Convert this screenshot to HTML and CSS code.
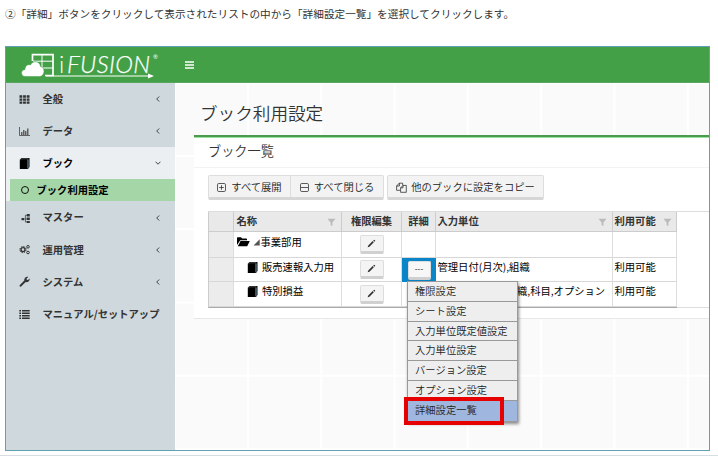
FILE: index.html
```html
<!DOCTYPE html>
<html lang="ja">
<head>
<meta charset="utf-8">
<title>ブック利用設定</title>
<link rel="stylesheet" href="styles.css">
</head>
<body>
<svg class="defs" aria-hidden="true">
  <symbol id="book" viewBox="0 0 11 11"><path d="M2.5 0H10.5V9L9 11H.8V1.8Z" fill="#000"/><path d="M1.3 2 2.8.8H9.3" fill="none" stroke="#999" stroke-width=".5"/><path d="M9 1.5V10.5" stroke="#8fb0c4" stroke-width=".9"/></symbol>
  <symbol id="pencil" viewBox="0 0 10 10"><path d="M.7 9.3 1.4 7.2 6.3 2.3 7.6 3.6 2.7 8.5ZM6.9 1.7 7.6 1Q8 .7 8.4 1L9 1.6Q9.3 1.9 9 2.3L8.2 3Z" fill="#333"/></symbol>
  <symbol id="filter" viewBox="0 0 9 9"><path d="M.5 .7H8.5L5.4 4.4V8.2L3.6 7V4.4Z" fill="#bbb"/></symbol>
</svg>
<p class="caption">②「詳細」ボタンをクリックして表示されたリストの中から「詳細設定一覧」を選択してクリックします。</p>
<div class="frame">
  <header class="topbar">
    <div class="logo">
      <svg class="logo-mark" viewBox="0 0 134 26">
        <g fill="none" stroke="#fff"><path d="M11.5 8V1.6H32V22.5H24" stroke-width="1.7"/><path d="M12 8.2H32M21 1.5V15M21 15H32" stroke-width="1"/><path d="M25 23H130" stroke-width="1"/></g>
        <path d="M4 23.5C-.5 23-.8 17 4 16.5C4 12.5 7 11 9.5 12C12 7 19 8 19.5 13.5C24 14 24.5 22.5 19 23.5Z" fill="#fff" stroke="#43a047" stroke-width=".5"/>
        <path d="M127 20.6 133 23 127 25.5Z" fill="#fff"/>
      </svg>
      <span class="logo-i">i</span><span class="logo-name">FUSION</span><span class="logo-r">®</span>
    </div>
    <svg class="burger" viewBox="0 0 9 8"><path d="M0 1H9M0 4H9M0 7H9" stroke="#fff" stroke-width="1.6"/></svg>
  </header>
  <div class="body">
    <nav class="side">
      <div class="item"><svg class="ico" viewBox="0 0 11 11"><path d="M.5 2.5H10.5M.5 5.6H10.5M.5 8.7H10.5" stroke="#333" stroke-width="2.3" stroke-dasharray="2.8 .8"/></svg><span>全般</span><svg class="arr" viewBox="0 0 6 6"><path d="M4.2.5 1.7 3 4.2 5.5"/></svg></div>
      <div class="item"><svg class="ico" viewBox="0 0 11 11"><path d="M.5 1V9.5H11" fill="none" stroke="#444" stroke-width=".8"/><path d="M2.8 9V6M4.8 9V4M6.8 9V5M8.8 9V2.5" stroke="#444" stroke-width="1.2"/></svg><span>データ</span><svg class="arr" viewBox="0 0 6 6"><path d="M4.2.5 1.7 3 4.2 5.5"/></svg></div>
      <div class="item open"><svg class="ico"><use href="#book"/></svg><span>ブック</span><svg class="arr" viewBox="0 0 6 6"><path d="M.5 1.7 3 4.2 5.5 1.7"/></svg></div>
      <div class="sub"><span class="ring"></span><span>ブック利用設定</span></div>
      <div class="item"><svg class="ico" viewBox="0 0 11 11"><path d="M2.5 6H5V8.3H2.5ZM7.8 2H10.8V4.6H7.8ZM7.8 5.6H10.8V8H7.8ZM7.8 9H10.8V11H7.8Z" fill="#333"/><path d="M4 7H8M6.4 3.3V10M6.4 3.3H8M6.4 10H8" fill="none" stroke="#333" stroke-width=".7"/></svg><span>マスター</span><svg class="arr" viewBox="0 0 6 6"><path d="M4.2.5 1.7 3 4.2 5.5"/></svg></div>
      <div class="item"><svg class="ico" viewBox="0 0 11 11"><g fill="none" stroke="#333"><circle cx="4" cy="5.6" r="2" stroke-width="1.4"/><circle cx="4" cy="5.6" r="3.1" stroke-width="1" stroke-dasharray="1.4 1.03"/><circle cx="9" cy="2.8" r="1.3"/><circle cx="9" cy="8.5" r="1.3"/></g></svg><span>運用管理</span><svg class="arr" viewBox="0 0 6 6"><path d="M4.2.5 1.7 3 4.2 5.5"/></svg></div>
      <div class="item"><svg class="ico" viewBox="0 0 11 11"><path d="M.7 9.2 5.3 4.6C4.8 2.2 7 .1 9.3.9L7.5 2.5 7.8 3.7 9 4 10.7 2.5C11 5 8.8 6.7 6.7 6L2.1 10.6Q1.4 11 .9 10.4Q.3 9.8.7 9.2Z" fill="#333"/></svg><span>システム</span><svg class="arr" viewBox="0 0 6 6"><path d="M4.2.5 1.7 3 4.2 5.5"/></svg></div>
      <div class="item"><svg class="ico" viewBox="0 0 11 11"><path d="M.3 1.7H2M.3 4.2H2M.3 6.7H2M.3 9.2H2M3 1.7H10.7M3 4.2H10.7M3 6.7H10.7M3 9.2H10.7" stroke="#333" stroke-width="1.5"/></svg><span>マニュアル/セットアップ</span></div>
    </nav>
    <main class="main">
      <h1>ブック利用設定</h1>
      <section class="panel">
        <h2>ブック一覧</h2>
        <div class="tools">
          <div class="group">
            <button class="btn expand"><svg viewBox="0 0 9 9"><rect x=".5" y=".5" width="8" height="8" rx="1.3"/><path d="M2.2 4.5H6.8M4.5 2.2V6.8"/></svg>すべて展開</button><button class="btn collapse"><svg viewBox="0 0 9 9"><rect x=".5" y=".5" width="8" height="8" rx="1.3"/><path d="M1 4.5H8"/></svg>すべて閉じる</button>
          </div>
          <div class="group"><button class="btn copy"><svg viewBox="0 0 11 11"><path d="M4.2 8.3H.6V4L3.2 1.2H6.6V3.4M3.4 1.2V4H.6M4.6 5.8 7 3.4H10.3V10.3H4.6ZM7 3.4V5.8H4.6"/></svg>他のブックに設定をコピー</button></div>
        </div>
        <div class="grid-wrap">
          <div class="grid">
            <div class="row head"><div></div><div>名称<svg class="flt"><use href="#filter"/></svg></div><div class="mid">権限編集</div><div class="mid">詳細</div><div>入力単位<svg class="flt"><use href="#filter"/></svg></div><div>利用可能<svg class="flt last"><use href="#filter"/></svg></div></div>
            <div class="row r1"><div class="gut"></div><div><svg class="folder" viewBox="0 0 13 10"><path d="M0 8V1Q0 .3.7.3H4L5 1.5H9.3Q10 1.5 10 2.3V3.3H3.2Z" fill="#000"/><path d="M3.5 4H12.8L10.2 9.3H.8Z" fill="#000"/></svg><svg class="tri" viewBox="0 0 7 7"><path d="M6.7.3V6.5H.5Z" fill="#555"/></svg>事業部用</div><div class="mid"><span class="mini"><svg><use href="#pencil"/></svg></span></div><div></div><div></div><div></div></div>
            <div class="row r2"><div class="gut"></div><div class="child"><svg class="bk"><use href="#book"/></svg>販売速報入力用</div><div class="mid"><span class="mini"><svg><use href="#pencil"/></svg></span></div>
              <div class="active"><span class="mini dots">---</span>
                <ul class="menu"><li>権限設定</li><li>シート設定</li><li>入力単位既定値設定</li><li>入力単位設定</li><li>バージョン設定</li><li>オプション設定</li><li class="sel">詳細設定一覧<span class="mark"></span></li></ul>
              </div><div>管理日付(月次),組織</div><div>利用可能</div></div>
            <div class="row r3"><div class="gut"></div><div class="child"><svg class="bk"><use href="#book"/></svg>特別損益</div><div class="mid"><span class="mini"><svg><use href="#pencil"/></svg></span></div><div></div><div class="tail">織,科目,オプション</div><div>利用可能</div></div>
          </div>
        </div>
      </section>
    </main>
  </div>
</div>
<div class="rule"></div>
</body>
</html>
```
FILE: styles.css
```css
* { box-sizing: border-box; }
body { margin: 0; width: 718px; height: 457px; overflow: hidden; background: #fff; color: #333; font: 10.3px/1 "Noto Sans CJK JP", "Noto Sans", sans-serif; }
.defs { position: absolute; width: 0; height: 0; }
svg { flex: none; }
.caption { margin: 0; height: 46px; padding: 5px 0 0 5px; font-size: 10.65px; line-height: 17px; white-space: nowrap; }
.frame { margin-left: 5px; width: 705px; height: 405px; border: 1px solid #62a0b4; }
.topbar { height: 36px; background: #43a047; border-bottom: 1px solid #5aa65e; display: flex; align-items: center; }
.logo { position: relative; width: 134px; height: 26px; margin: 3px 0 0 15px; color: #fff; font-family: Lato, sans-serif; }
.logo-mark { width: 134px; height: 26px; display: block; }
.logo-i, .logo-name, .logo-r { position: absolute; line-height: 1; font-weight: 400; }
.logo-i { left: 38px; top: -1px; font-size: 24px; font-weight: 300; }
.logo-name { left: 46px; top: -1px; font-size: 24px; font-style: italic; font-weight: 300; letter-spacing: .35px; -webkit-text-stroke: .25px #fff; }
.logo-r { left: 132px; top: 1px; font-size: 6px; }
.burger { width: 9px; height: 8px; margin: 0 0 0 30px; }
.body { display: flex; height: 367px; }
.side { width: 169px; background: #cfd8dc; font-weight: 700; }
.item { height: 32.2px; display: flex; align-items: center; padding: 0 14px 0 13px; white-space: nowrap; }
.item .ico { width: 11px; height: 11px; margin-right: 12.5px; }
.item.open { background: #eceff1; color: #000; height: 31.6px; }
.arr { width: 6px; height: 6px; margin-left: auto; fill: none; stroke: #444; stroke-width: 1; }
.sub { height: 22.5px; border-left: 4px solid #eceff1; background: #a5d6a7; color: #000; display: flex; align-items: center; padding-left: 10.5px; }
.ring { width: 8px; height: 8px; border: 1.5px solid #111; border-radius: 50%; margin-right: 8px; }
.main { flex: 1; min-width: 0; padding-left: 19px; background-color: #fafafa; background-image: linear-gradient(90deg, #fff 2px, transparent 2px), linear-gradient(#fff 2px, transparent 2px); background-size: 73.3px 73.3px; background-position: 72px 0, 0 72px; }
h1 { margin: 0; height: 52px; padding: 18px 0 0 6px; font-size: 17.6px; line-height: 24px; font-weight: 350; }
.panel { height: 184px; background: #fff; border-top: 2px solid #4a9b50; border-bottom: 1px solid #e8e8e8; box-shadow: inset 0 1px #9ce09e; }
h2 { margin: 0; height: 31px; padding: 4px 0 0 14px; font-size: 13.2px; line-height: 20px; font-weight: 350; border-bottom: 1px solid #f3f3f3; }
.tools { display: flex; gap: 3px; margin: 7px 0 0 14px; height: 25px; }
.group { display: flex; border: 1px solid #ddd; border-bottom: 3px solid #d6d6d6; border-radius: 2px; background: #f3f3f3; }
.btn { border: 0; padding: 2px 0 0; background: none; color: #222; font: inherit; font-weight: 350; display: flex; align-items: center; justify-content: center; gap: 5px; white-space: nowrap; }
.btn svg { width: 9px; height: 9px; fill: none; stroke: #333; stroke-width: .8; }
.expand { width: 82px; border-right: 1px solid #ddd; }
.collapse { width: 92px; }
.copy { width: 155px; gap: 4px; }
.copy svg { width: 11px; height: 11px; }
.grid-wrap { margin: 11px 0 0 14px; height: 97px; border-top: 1px solid #ddd; border-bottom: 1px solid #ddd; }
.grid { width: 469px; border-left: 1px solid #ccc; border-bottom: 1px solid #aaa; color: #000; }
.row { display: grid; grid-template-columns: 25px 108px 60px 34px 177px 64px; }
.row > div { display: flex; align-items: center; border-right: 1px solid #ddd; border-bottom: 1px solid #d8d8d8; padding-left: 1.5px; white-space: nowrap; min-width: 0; }
.row > div:nth-child(2) { padding-left: 2.5px; }
.row > .mid { justify-content: center; padding: 0; }
.head { height: 20px; background: #e9e9e9; color: #333; font-weight: 700; }
.head > div { border-color: #ccc; }
.flt { width: 9px; height: 9px; margin: 2px 5px 0 auto; }
.flt.last { margin-right: 4px; }
.r1 { height: 26px; }
.r1 > div:nth-child(2) { padding-bottom: 5px; }
.r2 { height: 24px; }
.r2 > div, .r3 > div { padding-bottom: 5px; }
.r3 { height: 25px; }
.row > .gut { background: #ececec; }
.folder { width: 13px; height: 10px; margin-right: 3px; }
.tri { width: 7px; height: 7px; margin-right: 1px; }
.row > .child:nth-child(2) { padding-left: 13px; }
.bk { width: 11px; height: 11px; margin-right: 4px; }
.mini { width: 24px; height: 19px; border: 1px solid #ddd; border-bottom: 3px solid #d0d0d0; border-radius: 2px; background: #f4f4f4; display: flex; align-items: center; justify-content: center; }
.mini svg { width: 9px; height: 9px; }
.r2 .mid, .r3 .mid { padding: 0; }
.row > .active { position: relative; width: 34px; padding: 0; justify-content: center; background: #0a86c8; border: 0; }
.dots { width: 23px; font-size: 8px; background: #f7f7f7; }
.menu { position: absolute; z-index: 2; left: 5px; top: 23px; width: 111px; margin: 0; padding: 0; list-style: none; border: 1px solid #999; background: #eee; box-shadow: 1px 2px 3px rgba(0, 0, 0, .45); color: #222; font-weight: 350; }
.menu li { position: relative; height: 19.8px; padding-left: 7px; line-height: 18.5px; border-bottom: 1px solid #999; }
.menu .sel { background: #9fb6df; border: 0; }
.mark { position: absolute; left: -4px; top: -4px; width: 100px; height: 28px; border: 4px solid #e60000; }
.row > .tail { padding-left: 81px; }
.rule { margin-top: 4px; height: 1px; background: #d8dde2; }
```
